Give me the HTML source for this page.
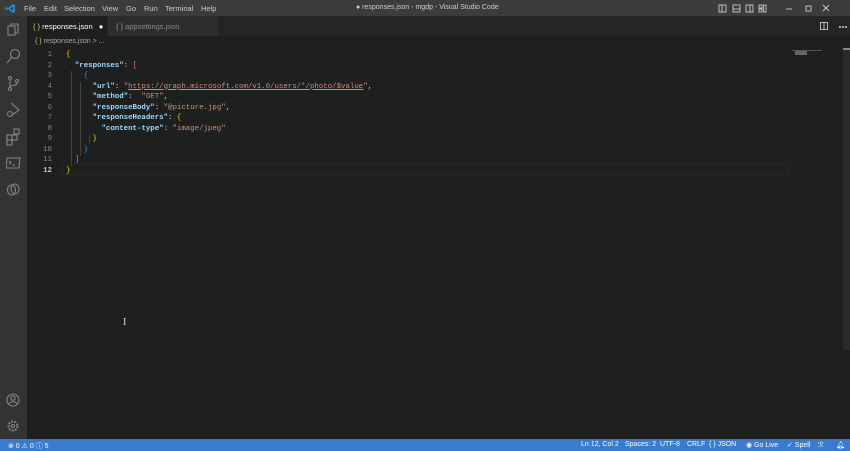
<!DOCTYPE html>
<html><head><style>
*{margin:0;padding:0;box-sizing:border-box}
body{width:850px;height:451px;background:#1e1f1f;font-family:"Liberation Sans",sans-serif;color:#ccc;position:relative;overflow:hidden;font-size:8px}
.abs{position:absolute}
#title{left:0;top:0;width:850px;height:16px;background:#3c3c3c}
#title span{position:absolute;top:4px;font-size:7.5px;color:#ccc}
#act{left:0;top:16px;width:27px;height:423px;background:#333333}
#tabs{left:27px;top:16px;width:823px;height:20px;background:#252526}
.tab{position:absolute;top:0;height:20px;font-size:7.5px;padding-top:6px}
#status{left:0;top:439px;width:850px;height:12px;background:#3a7bce;color:#fff;font-size:7px}
#status span{position:absolute;top:2px}
.code{font-family:"Liberation Mono",monospace;font-size:7.4px;line-height:10.55px;white-space:pre}
#ln{left:30px;top:50px;width:22px;text-align:right;color:#858585}
#src{left:66px;top:50px;color:#d4d4d4}
.k{color:#9cdcfe;font-weight:bold}.s{color:#ce9178}.y{color:#ffd700}.m{color:#da70d6}.b{color:#179fff}
svg{position:absolute}
</style></head><body>
<div id="title" class="abs">
<svg style="left:5px;top:3px" width="11" height="11" viewBox="0 0 11 11"><path d="M8 1 L10 2 V9 L8 10 L3 6 L1 7.5 L0.5 7 V4 L1 3.5 L3 5 Z M8 3.5 L5 5.5 L8 7.5 Z" fill="#2489ca"/></svg>
<span style="left:24px">File</span><span style="left:44px">Edit</span><span style="left:64px">Selection</span><span style="left:102px">View</span><span style="left:126px">Go</span><span style="left:144px">Run</span><span style="left:165px">Terminal</span><span style="left:201px">Help</span>
<span style="left:356px;font-size:7px">● responses.json - mgdp - Visual Studio Code</span>
<svg style="left:718px;top:4px" width="120" height="9" viewBox="0 0 120 9" fill="none" stroke="#ccc" stroke-width="0.9"><rect x="1" y="1" width="7" height="7"/><line x1="4" y1="1" x2="4" y2="8"/><rect x="15" y="1" width="7" height="7"/><line x1="15" y1="5" x2="22" y2="5"/><rect x="28" y="1" width="7" height="7"/><line x1="32" y1="1" x2="32" y2="8"/><rect x="41" y="1" width="3" height="3"/><rect x="41" y="5" width="3" height="3"/><rect x="45.5" y="1" width="2.5" height="7"/><line x1="68" y1="5" x2="74" y2="5"/><rect x="88" y="2" width="5" height="5"/><line x1="105" y1="1" x2="111" y2="7"/><line x1="111" y1="1" x2="105" y2="7"/></svg>
</div>
<div id="act" class="abs">
<svg style="left:6px;top:7px" width="15" height="180" viewBox="0 0 15 180" fill="none" stroke="#858585" stroke-width="1.1">
<rect x="2" y="3" width="7" height="9"/><path d="M5 3V1h7v9h-3"/>
<circle cx="9" cy="31" r="4.5"/><line x1="6" y1="34" x2="1" y2="40"/>
<circle cx="4" cy="55" r="1.5"/><circle cx="4" cy="66" r="1.5"/><circle cx="11" cy="58" r="1.5"/><line x1="4" y1="57" x2="4" y2="64"/><path d="M11 60c0 3-7 2-7 4"/>
<path d="M5 80 L13 87 L5 93"/><circle cx="4" cy="91" r="2.5"/>
<rect x="1" y="112" width="5" height="5"/><rect x="6" y="112" width="5" height="5"/><rect x="1" y="117" width="5" height="5"/><rect x="8" y="106" width="5" height="5"/>
<path d="M1 135h13l-1 10H0z"/><path d="M3 138l2 1.5-2 1.5M6 142h3"/>
<ellipse cx="5.5" cy="167" rx="4" ry="5"/><ellipse cx="9" cy="166" rx="4" ry="5"/>
</svg>
<svg style="left:6px;top:377px" width="15" height="40" viewBox="0 0 15 40" fill="none" stroke="#858585" stroke-width="1.1"><circle cx="7" cy="7" r="6"/><circle cx="7" cy="5" r="2.2"/><path d="M3 11c1-3 7-3 8 0"/><circle cx="7" cy="33" r="4.5" stroke-dasharray="2 1.2" stroke-width="2"/><circle cx="7" cy="33" r="1.6"/></svg>
</div>
<div id="tabs" class="abs">
<div class="tab" style="left:0;width:80px;background:#1e1f1f;padding-left:6px;color:#fff"><span style="color:#d7ba7d">{ }</span> responses.json <span style="margin-left:4px">●</span></div>
<div class="tab" style="left:81px;width:110px;background:#2d2d2d;padding-left:8px;color:#8b8b8b"><span style="color:#b59548">{ }</span> appsettings.json</div>
<svg style="left:793px;top:6px" width="30" height="9" viewBox="0 0 30 9" fill="none" stroke="#ccc" stroke-width="0.9"><rect x="0.5" y="0.5" width="7" height="7"/><line x1="4" y1="0.5" x2="4" y2="7.5"/><circle cx="20" cy="5" r=".6" fill="#ccc"/><circle cx="23" cy="5" r=".6" fill="#ccc"/><circle cx="26" cy="5" r=".6" fill="#ccc"/></svg>
</div>
<div class="abs" style="left:35px;top:38px;font-size:7px;color:#a9a9a9"><span style="color:#d7ba7d">{ }</span> responses.json &gt; ...</div>
<div class="abs" style="left:62px;top:164px;width:727px;height:11px;border:1px solid #282828"></div>
<div id="ln" class="abs code">1
2
3
4
5
6
7
8
9
10
11
<span style="color:#c6c6c6;font-weight:bold">12</span></div>
<div id="src" class="abs code"><span class="y">{</span>
  <span class="k">"responses"</span>: <span class="m">[</span>
    <span class="b">{</span>
      <span class="k">"url"</span>: <span class="s">"<u>https://graph.microsoft.com/v1.0/users/*/photo/$value</u>"</span>,
      <span class="k">"method"</span>:  <span class="s">"GET"</span>,
      <span class="k">"responseBody"</span>: <span class="s">"@picture.jpg"</span>,
      <span class="k">"responseHeaders"</span>: <span class="y">{</span>
        <span class="k">"content-type"</span>: <span class="s">"image/jpeg"</span>
      <span class="y">}</span>
    <span class="b">}</span>
  <span class="m">]</span>
<span class="y">}</span></div>
<div class="abs" style="left:71px;top:71px;width:1px;height:95px;background:#404040"></div>
<div class="abs" style="left:80px;top:82px;width:1px;height:74px;background:#404040"></div>
<div class="abs" style="left:89px;top:135px;width:1px;height:10px;background:#404040"></div>
<div class="abs" style="left:792px;top:50px;width:30px;height:1px;background:#555"></div>
<div class="abs" style="left:795px;top:51px;width:12px;height:4px;background:#666"></div>
<div class="abs" style="left:843px;top:48px;width:7px;height:302px;background:#2a2b2b"></div>
<div class="abs" style="left:843px;top:48px;width:7px;height:2px;background:#888"></div>
<div class="abs" style="left:123px;top:317px;color:#ddd;font-size:10px;font-family:'Liberation Serif',serif">I</div>
<div id="status" class="abs">
<span style="left:8px">⊗ 0 ⚠ 0 ⓘ 5</span>
<span style="left:581px">Ln 12, Col 2</span><span style="left:625px">Spaces: 2</span><span style="left:660px">UTF-8</span><span style="left:687px">CRLF</span><span style="left:709px">{ } JSON</span><span style="left:746px">◉ Go Live</span><span style="left:787px">✓ Spell</span><span style="left:818px">ℛ</span><span style="left:836px">🔔︎</span>
</div>
</body></html>
